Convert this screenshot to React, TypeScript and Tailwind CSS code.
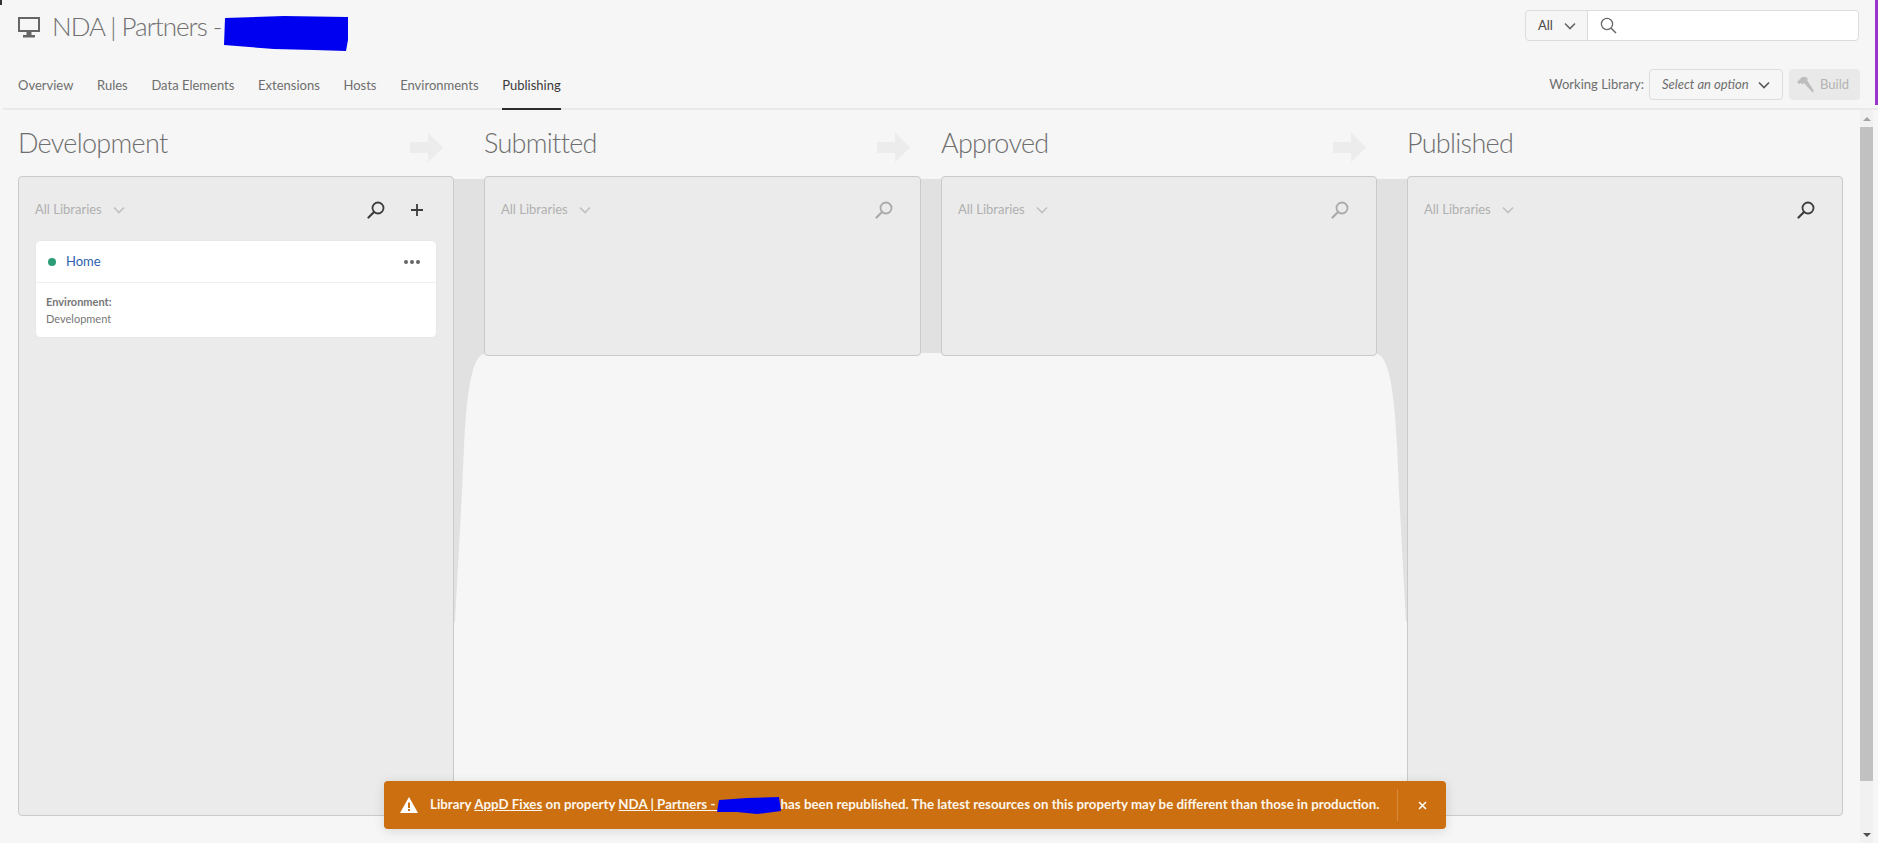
const tabs = ["Overview", "Rules", "Data Elements", "Extensions", "Hosts", "Environments", "Publishing"];

function Chevron({ className = "" }: { className?: string }) {
  return (
    <svg width="12" height="8" viewBox="0 0 12 8" fill="none" className={className}>
      <path d="M1 1.5 6 6.5 11 1.5" stroke="currentColor" strokeWidth="1.6" />
    </svg>
  );
}

function PanelSearch({ className = "" }: { className?: string }) {
  return (
    <svg width="18" height="18" viewBox="0 0 18 18" fill="none" className={className}>
      <circle cx="11" cy="7" r="5.5" stroke="currentColor" strokeWidth="1.8" />
      <path d="M7 11 1.5 16.500" stroke="currentColor" strokeWidth="2.2" strokeLinecap="round" />
    </svg>
  );
}

function Arrow() {
  return (
    <svg width="33" height="29" viewBox="0 0 33 29" className="mr-[11px] mt-[23px]">
      <path d="M0 9H18V0L33 14.5 18 29V20H0Z" fill="#ececec" />
    </svg>
  );
}

function Column({
  title,
  arrow,
  tall,
  active,
  plus,
  className = "",
  children,
}: {
  title: string;
  arrow?: boolean;
  tall?: boolean;
  active?: boolean;
  plus?: boolean;
  className?: string;
  children?: React.ReactNode;
}) {
  return (
    <div className={`shrink-0 flex flex-col ${className}`}>
      <div className="flex justify-between h-[66px]">
        <h2 className="text-[27px] tracking-[-0.7px] leading-[66px] font-light text-[#6e6e6e]">{title}</h2>
        {arrow && <Arrow />}
      </div>
      <div className={`rounded-[4px] border border-[#cacaca] bg-[#ebebeb] px-[16px] ${tall ? "h-[640px]" : "h-[180px]"}`}>
        <div className="flex items-center h-[64px] pt-[1px] text-[13px] text-[#b0b0b0]">
          <span>All Libraries</span>
          <Chevron className="ml-[11px] text-[#c0c0c0]" />
          <PanelSearch className={`ml-auto ${active ? "text-[#3c3c3c]" : "text-[#a9a9a9]"} ${plus ? "" : "mr-[11px]"}`} />
          {plus && (
            <svg width="14" height="14" viewBox="0 0 14 14" className="ml-[25px] mr-[13px] text-[#3c3c3c]">
              <path d="M7 1V13M1 7H13" stroke="currentColor" strokeWidth="1.8" />
            </svg>
          )}
        </div>
        {children}
      </div>
    </div>
  );
}

export default function App() {
  return (
    <div className="relative h-screen w-full overflow-hidden bg-[#f6f6f6] pl-[3px] font-['Lato',sans-serif]">
      <div className="absolute left-0 top-0 h-[5px] w-[2px] bg-[#333]" />
      <div className="absolute right-0 top-0 h-[105px] w-[3px] bg-[#9a35cb]" />

      {/* header */}
      <header className="border-b-2 border-[#e9e9e9] h-[110px]">
        <div className="flex justify-between h-[58px] pl-[15px] pr-[19px] pt-[10px]">
          <div className="flex items-start">
            <svg width="22" height="21" viewBox="0 0 22 21" className="mt-[7px] text-[#666]">
              <path fillRule="evenodd" d="M0 0H22V15H13.5V18H17V20.5H5V18H8.5V15H0ZM2 2V13H20V2Z" fill="currentColor" />
            </svg>
            <h1 className="ml-[12px] text-[26px] tracking-[-1px] leading-[32px] font-light text-[#707070] whitespace-nowrap">NDA | Partners -</h1>
            <svg width="124" height="36" viewBox="0 0 124 36" className="ml-[3px] mt-[5px]">
              <path d="M1 3 60 1 124 2 124 25 122 36 90 35 50 34 0 30Z" fill="#0000f0" />
            </svg>
          </div>
          <div className="flex h-[31px] w-[334px] rounded-[4px] border border-[#dcdcdc]">
            <div className="flex items-center w-[62px] border-r border-[#dcdcdc] pl-[12px] text-[13px] text-[#4b4b4b]">
              All
              <Chevron className="ml-[11px] text-[#666]" />
            </div>
            <div className="flex items-center flex-1 rounded-r-[4px] bg-white pl-[12px]">
              <svg width="17" height="17" viewBox="0 0 17 17" fill="none" className="text-[#666]">
                <circle cx="7" cy="7" r="5.6" stroke="currentColor" strokeWidth="1.3" />
                <path d="M11 11 16 16" stroke="currentColor" strokeWidth="1.5" />
              </svg>
            </div>
          </div>
        </div>
        <div className="flex justify-between h-[50px] pl-[15px] pr-[18px]">
          <nav className="flex gap-[23.7px]">
            {tabs.map((tab) => (
              <a
                key={tab}
                className={`h-[52px] pt-[17px] text-[13px] leading-[20px] ${tab === "Publishing" ? "border-b-2 border-[#2c2c2c] text-[#3a3a3a]" : "text-[#6e6e6e]"}`}
              >
                {tab}
              </a>
            ))}
          </nav>
          <div className="flex items-start pt-[11px]">
            <span className="mr-[5px] text-[13px] leading-[31px] text-[#6e6e6e]">Working Library:</span>
            <div className="flex items-center justify-between w-[134px] h-[31px] rounded-[4px] border border-[#dcdcdc] pl-[12px] pr-[12px] text-[13px] italic text-[#6e6e6e]">
              Select an option
              <Chevron className="text-[#555]" />
            </div>
            <button className="flex items-center ml-[6px] w-[71px] h-[31px] rounded-[4px] bg-[#e9e9e9] pl-[8px] text-[13px] text-[#b3b3b3]">
              <svg width="17" height="17" viewBox="0 0 17 17" className="mr-[6px]">
                <path d="M0 6 5 1H9L11 3 10 4 17 15 15.500 16.500 7 7 5.500 8.500 4 7 2 8Z" fill="#bdbdbd" />
              </svg>
              Build
            </button>
          </div>
        </div>
      </header>

      {/* body */}
      <div className="flex h-[733px]">
        <main className="flex-1 flex pl-[15px]">
          <Column title="Development" arrow tall active plus className="w-[436px]">
            <div className="mx-[1px] rounded-[4px] bg-white shadow-[0_0_1px_rgba(0,0,0,0.15)]">
              <div className="flex items-center h-[42px] border-b border-[#efefef] pl-[12px] pr-[16px]">
                <span className="h-[8px] w-[8px] rounded-full bg-[#2d9d78]" />
                <a className="ml-[10px] text-[13px] text-[#2d5fae]">Home</a>
                <span className="ml-auto flex gap-[2px]">
                  <i className="h-[4px] w-[4px] rounded-full bg-[#666]" />
                  <i className="h-[4px] w-[4px] rounded-full bg-[#666]" />
                  <i className="h-[4px] w-[4px] rounded-full bg-[#666]" />
                </span>
              </div>
              <div className="h-[54px] pl-[10px] pt-[10px] text-[11px] leading-[17px] text-[#777]">
                <div className="font-bold">Environment:</div>
                <div>Development</div>
              </div>
            </div>
          </Column>

          <div className="shrink-0 w-[30px] mt-[66px]">
            <svg width="30" height="447" viewBox="0 0 30 447" className="block">
              <path d="M0 3H30V178C19 180 13 210 10 270 8 320 4 390 1 446H0Z" fill="#e1e1e1" />
            </svg>
          </div>

          <Column title="Submitted" arrow className="w-[437px]" />
          <div className="shrink-0 w-[20px] h-[174px] mt-[69px] bg-[#e1e1e1]" />
          <Column title="Approved" arrow className="w-[436px]" />

          <div className="shrink-0 w-[30px] mt-[66px]">
            <svg width="30" height="447" viewBox="0 0 30 447" className="block">
              <path d="M30 3H0V178C11 180 17 210 20 270 22 320 26 390 29 446H30Z" fill="#e1e1e1" />
            </svg>
          </div>

          <Column title="Published" tall active className="w-[436px]" />
        </main>

        {/* scrollbar */}
        <div className="flex flex-col items-center shrink-0 w-[13px] mr-[5px] bg-[#f1f1f1]">
          <div className="flex items-center justify-center h-[17px] w-full">
            <span className="h-0 w-0 border-x-[4px] border-b-[4px] border-x-transparent border-b-[#a3a3a3]" />
          </div>
          <div className="h-[654px] w-full bg-[#c1c1c1]" />
          <div className="flex-1 flex items-end justify-center w-full pb-[6px]">
            <span className="h-0 w-0 border-x-[4px] border-t-[4px] border-x-transparent border-t-[#505050]" />
          </div>
        </div>
      </div>

      {/* toast */}
      <div className="absolute left-[384px] top-[781px] flex items-center w-[1062px] h-[48px] rounded-[4px] bg-[#cb6f10] pl-[16px] shadow-[0_2px_12px_rgba(0,0,0,0.12)] text-[13.3px] font-bold text-[#fdf6ec]">
        <svg width="18" height="16" viewBox="0 0 18 16" className="shrink-0">
          <path fillRule="evenodd" d="M9 0 18 16H0ZM8 5.500V11H10V5.500ZM8 12V14H10V12Z" fill="#fff" />
        </svg>
        <p className="ml-[12px] flex items-center whitespace-pre">
          Library <u>AppD Fixes</u> on property <u>NDA | Partners - </u>
          <svg width="64" height="17" viewBox="0 0 64 17" className="-ml-[2px]">
            <path d="M2 3 30 1 62 0 64 14 40 17 20 15 0 15Z" fill="#0000f0" />
          </svg>
          <span>has been republished. The latest resources on this property may be different than those in production.</span>
        </p>
        <div className="ml-auto flex items-center justify-center w-[49px] h-[32px] border-l border-[#d98a3c]">
          <svg width="9" height="9" viewBox="0 0 9 9">
            <path d="M1 1 8 8M8 1 1 8" stroke="#fff" strokeWidth="1.5" />
          </svg>
        </div>
      </div>
    </div>
  );
}
